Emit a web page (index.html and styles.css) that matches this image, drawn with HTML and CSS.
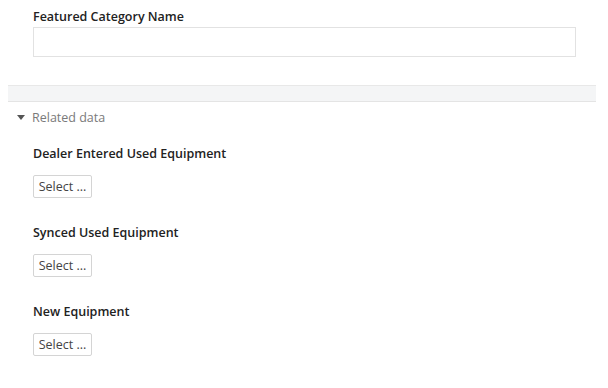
FILE: index.html
```html
<!DOCTYPE html>
<html>
<head>
<meta charset="utf-8">
<link rel="stylesheet" href="styles.css">
</head>
<body>
<div class="page">
  <div class="field first">
    <label class="label">Featured Category Name</label>
    <div class="input"></div>
  </div>
  <div class="band"></div>
  <div class="section-head">
    <span class="caret"></span>
    <span class="section-title">Related data</span>
  </div>
  <div class="field">
    <div class="label">Dealer Entered Used Equipment</div>
    <button class="select-btn">Select ...</button>
  </div>
  <div class="field">
    <div class="label">Synced Used Equipment</div>
    <button class="select-btn">Select ...</button>
  </div>
  <div class="field">
    <div class="label">New Equipment</div>
    <button class="select-btn">Select ...</button>
  </div>
</div>
</body>
</html>
```
FILE: styles.css
```css
html, body {
  margin: 0;
  padding: 0;
  background: #fff;
}
body {
  font-family: "Open Sans", "Liberation Sans", sans-serif;
  color: #333;
}
.page {
  padding: 9px 12px 0 8px;
}
.field {
  padding-left: 25px;
  display: flex;
  flex-direction: column;
  align-items: flex-start;
}
.label {
  font-size: 12.5px;
  font-weight: 600;
  line-height: 16px;
  color: #222;
  margin-bottom: 13px;
}
.first .label {
  margin-bottom: 2px;
}
.input {
  align-self: stretch;
  margin-right: 20px;
  height: 28px;
  border: 1px solid #e2e2e2;
  background: #fff;
}
.band {
  margin-top: 28px;
  height: 15px;
  background: #f4f5f6;
  border-top: 1px solid #e8e8e8;
  border-bottom: 1px solid #e4e4e4;
}
.section-head {
  display: flex;
  align-items: center;
  height: 30px;
  padding-left: 9px;
}
.caret {
  width: 0;
  height: 0;
  border-left: 4px solid transparent;
  border-right: 4px solid transparent;
  border-top: 5px solid #555;
  margin-right: 7px;
}
.section-title {
  font-size: 12.5px;
  color: #7a7a7a;
}
.section-head + .field {
  margin-top: 14px;
}
.field + .field {
  margin-top: 1px;
}
.select-btn {
  font-family: "Open Sans", "Liberation Sans", sans-serif;
  font-size: 12.5px;
  color: #444;
  background: #fff;
  border: 1px solid #d4d4d4;
  border-radius: 2px;
  height: 23px;
  width: 59px;
  padding: 0;
  margin-bottom: 26px;
}
```
